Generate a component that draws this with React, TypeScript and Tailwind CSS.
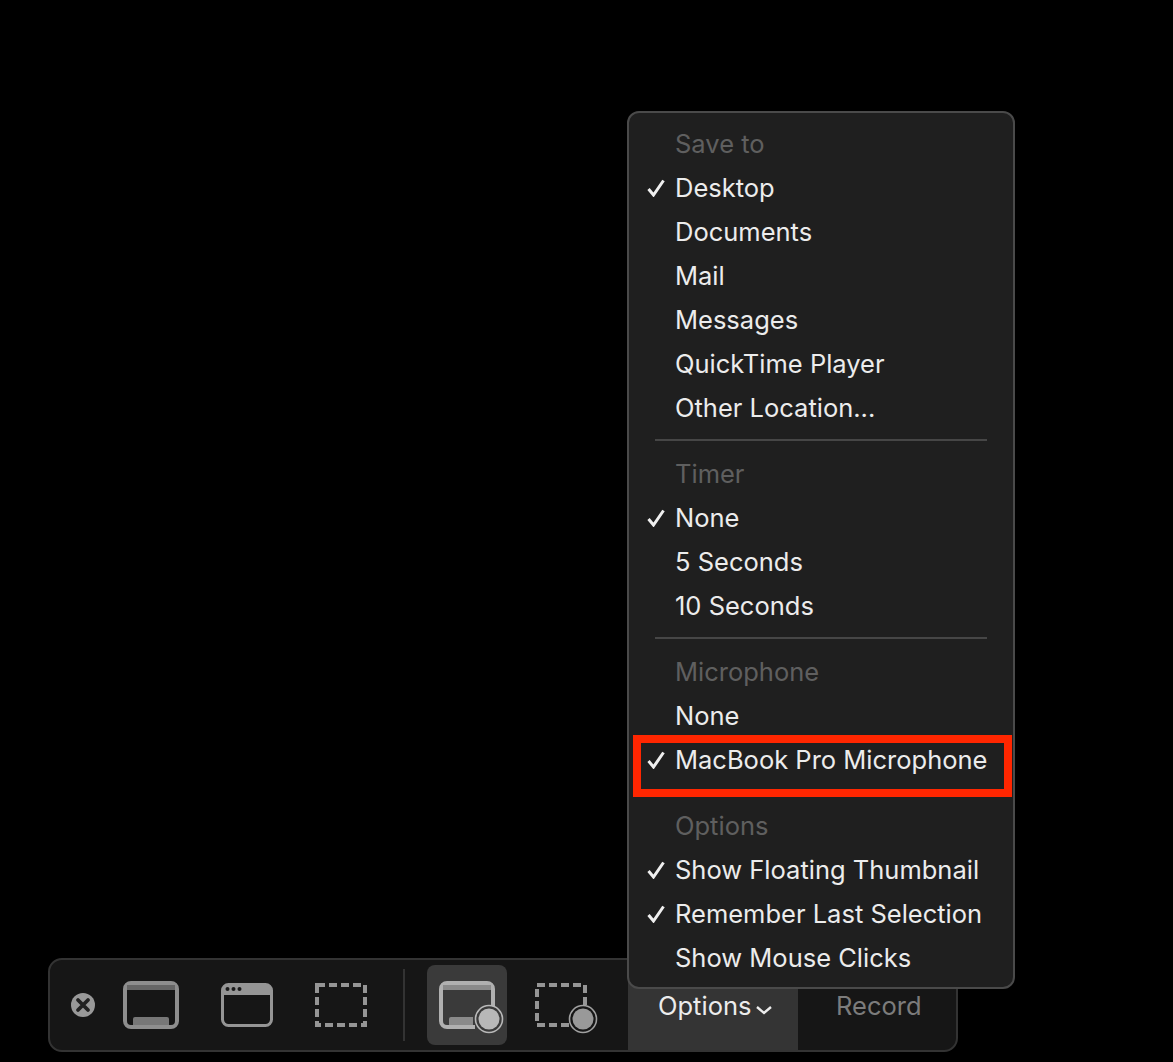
const font = { fontFamily: "Inter, 'Noto Sans', sans-serif" };

const sections = [
    {
        title: "Save to",
        items: [
            { label: "Desktop", checked: true },
            { label: "Documents" },
            { label: "Mail" },
            { label: "Messages" },
            { label: "QuickTime Player" },
            { label: "Other Location..." },
        ],
    },
    {
        title: "Timer",
        items: [
            { label: "None", checked: true },
            { label: "5 Seconds" },
            { label: "10 Seconds" },
        ],
    },
    {
        title: "Microphone",
        items: [
            { label: "None" },
            { label: "MacBook Pro Microphone", checked: true },
        ],
    },
    {
        title: "Options",
        items: [
            { label: "Show Floating Thumbnail", checked: true },
            { label: "Remember Last Selection", checked: true },
            { label: "Show Mouse Clicks" },
        ],
    },
];

const Check = () => (
    <svg width="18" height="18" viewBox="0 0 18 18" className="absolute left-[18px] top-[13px]">
        <path d="M1.5 10 L6.5 16 L16.5 1.5" fill="none" stroke="#efefef" strokeWidth="3" />
    </svg>
);

const CloseIcon = () => (
    <svg width="24" height="24" viewBox="0 0 24 24">
        <circle cx="12" cy="12" r="12" fill="#999999" />
        <path d="M7 7 L17 17 M17 7 L7 17" stroke="#222222" strokeWidth="3.8" strokeLinecap="round" />
    </svg>
);

const ScreenIcon = () => (
    <svg width="56" height="48" viewBox="0 0 56 48">
        <rect x="2" y="2" width="52" height="44" rx="6" fill="none" stroke="#8e8e8e" strokeWidth="4" />
        <rect x="4" y="4" width="48" height="5" fill="#666666" />
        <path d="M10 38 a2 2 0 0 1 2-2 h32 a2 2 0 0 1 2 2 v6 h-36 z" fill="#777777" />
    </svg>
);

const WindowIcon = () => (
    <svg width="52" height="44" viewBox="0 0 52 44">
        <rect x="1.5" y="1.5" width="49" height="41" rx="6" fill="none" stroke="#959595" strokeWidth="3" />
        <path d="M1.5 12 V7 a6 6 0 0 1 6-6 h37 a6 6 0 0 1 6 6 v5 z" fill="#959595" />
        <circle cx="6.5" cy="6" r="2" fill="#1a1a1a" />
        <circle cx="12.5" cy="6" r="2" fill="#1a1a1a" />
        <circle cx="18.5" cy="6" r="2" fill="#1a1a1a" />
    </svg>
);

const SelectionIcon = () => (
    <svg width="52" height="44" viewBox="0 0 52 44">
        <rect x="2" y="2" width="48" height="40" fill="none" stroke="#959595" strokeWidth="4" strokeDasharray="8 4" />
    </svg>
);

const RecordScreenIcon = () => (
    <svg width="66" height="56" viewBox="0 0 66 56">
        <path d="M54 26 V8 a6 6 0 0 0-6-6 H8 a6 6 0 0 0-6 6 V40 a6 6 0 0 0 6 6 H36" fill="none" stroke="#b0b0b0" strokeWidth="4" />
        <rect x="4" y="4" width="48" height="5" fill="#8a8a8a" />
        <path d="M10 38 a2 2 0 0 1 2-2 h22 v8 h-24 z" fill="#8a8a8a" />
        <circle cx="50" cy="38" r="13.5" fill="#3a3a3a" stroke="#b8b8b8" strokeWidth="1.6" />
        <circle cx="50" cy="38" r="10.5" fill="#b8b8b8" />
    </svg>
);

const RecordSelectionIcon = () => (
    <svg width="66" height="56" viewBox="0 0 66 56">
        <path d="M50 24 V4 H2 V44 H34" fill="none" stroke="#959595" strokeWidth="4" strokeDasharray="8 4" />
        <circle cx="48" cy="38" r="13.5" fill="#161616" stroke="#a0a0a0" strokeWidth="1.6" />
        <circle cx="48" cy="38" r="10.5" fill="#999999" />
    </svg>
);

const Menu = () => (
    <div className="absolute left-[627px] top-[111px] w-[388px] h-[878px] rounded-[12px] border-2 border-[#4a4a4a] bg-[#1f1f1f] pt-[9px]">
        {sections.map((section, i) => (
            <div key={section.title}>
                {i > 0 && (
                    <div className="h-[22px] flex items-center px-[26px] pb-[2px]">
                        {i < 3 && <div className="h-[2px] w-full bg-[#464646]" />}
                    </div>
                )}
                <div className="h-[44px] pl-[46px] flex items-center text-[25.5px] text-[#5f5f5f]">
                    {section.title}
                </div>
                {section.items.map((item) => (
                    <div
                        key={item.label}
                        className="relative h-[44px] pl-[46px] flex items-center text-[25.5px] text-[#ececec] whitespace-nowrap"
                    >
                        {item.checked && <Check />}
                        {item.label}
                    </div>
                ))}
            </div>
        ))}
    </div>
);

const App: React.FC = () => {
    return (
        <div className="relative h-[1062px] bg-black overflow-hidden flex flex-col justify-end pb-[10px] pl-[48px]" style={font}>
            <div className="flex items-stretch w-[910px] h-[94px] rounded-[14px] border-2 border-[#333333] bg-[#161616] overflow-hidden">
                <div className="flex items-center w-[578px]">
                    <div className="ml-[21px]"><CloseIcon /></div>
                    <div className="ml-[28px]"><ScreenIcon /></div>
                    <div className="ml-[42px]"><WindowIcon /></div>
                    <div className="ml-[42px]"><SelectionIcon /></div>
                    <div className="ml-[36px] w-[2px] h-[72px] bg-[#333333]" />
                    <div className="ml-[22px] w-[80px] h-[80px] rounded-[8px] bg-[#3a3a3a] flex items-start pl-[12px] pt-[16px]">
                        <RecordScreenIcon />
                    </div>
                    <div className="ml-[28px] pt-[8px] flex items-center"><RecordSelectionIcon /></div>
                </div>
                <div className="w-[170px] bg-[#343434] flex items-center pl-[30px] pt-[2px] text-[25.5px] text-[#ececec]">
                    Options
                    <svg width="18" height="12" viewBox="0 0 18 12" className="ml-[4px] mt-[8px]">
                        <path d="M2 3 L9 9 L16 3" fill="none" stroke="#ececec" strokeWidth="2.4" />
                    </svg>
                </div>
                <div className="flex-1 flex items-center pl-[38px] pt-[2px] text-[25.5px] text-[#7c7c7c]">
                    Record
                </div>
            </div>
            <Menu />
            <div className="absolute left-[633px] top-[735px] w-[379px] h-[62px] border-[8px] border-[#ff2600]" />
        </div>
    );
};

export default App;
